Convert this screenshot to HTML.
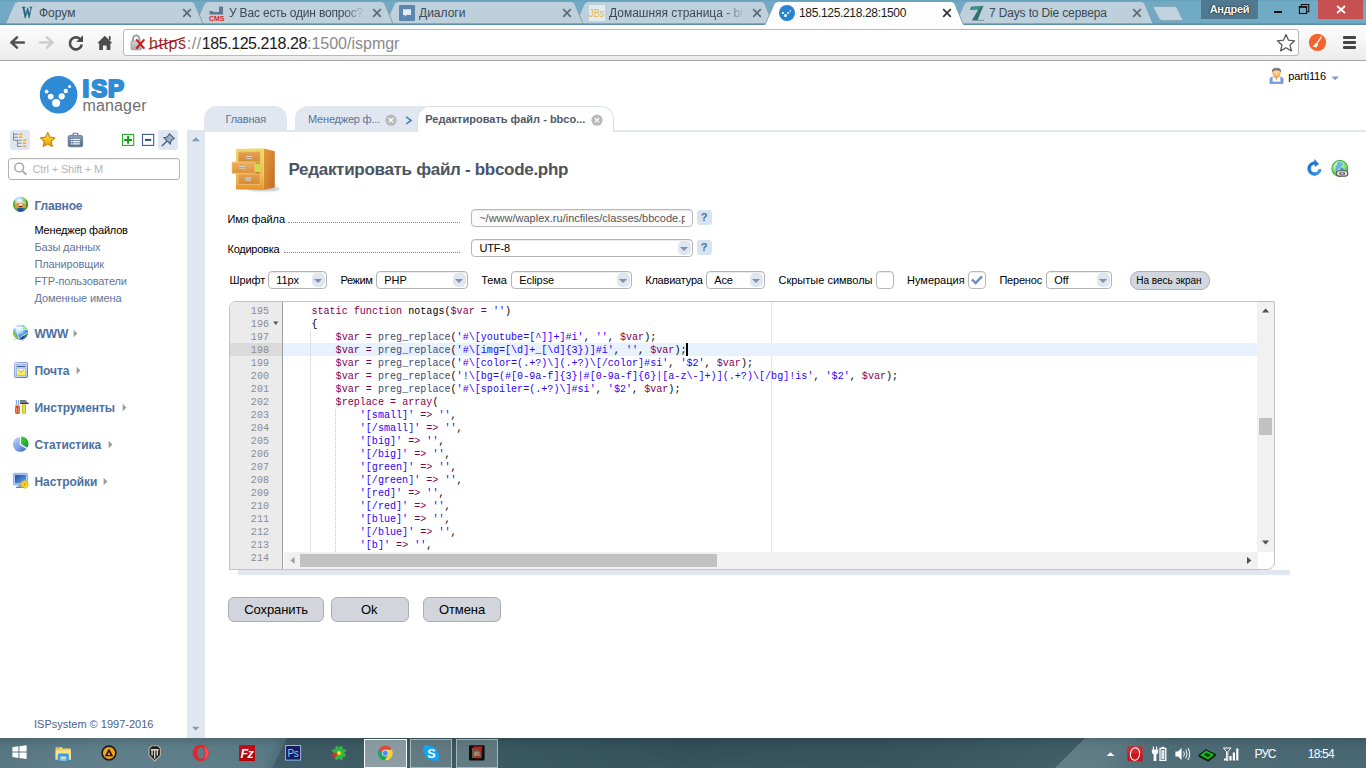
<!DOCTYPE html>
<html lang="ru">
<head>
<meta charset="utf-8">
<title>185.125.218.28:1500</title>
<style>
*{box-sizing:border-box;margin:0;padding:0}
html,body{width:1366px;height:768px;overflow:hidden;background:#fff}
body{font-family:"Liberation Sans",sans-serif;font-size:12px;color:#000;position:relative}
.abs{position:absolute}
/* ---------- browser chrome ---------- */
#frame{position:absolute;left:0;top:0;width:1366px;height:26px;background:#6ba6c1}
.bt{position:absolute;top:4px;font-size:12px;white-space:nowrap;width:147px;overflow:hidden;height:18px;line-height:18px}
.btab svg{position:absolute;left:0;top:0}
.btab .t{position:absolute;left:39px;top:4px;font-size:13px;color:#3f4d57;white-space:nowrap;letter-spacing:-0.1px}
.btab .x{position:absolute;right:22px;top:3px;font-size:14px;color:#5a6770}
#toolbar{position:absolute;left:0;top:24.6px;width:1366px;height:36.2px;background:linear-gradient(#fdfdfd,#ececec);border-bottom:1px solid #a5a5a5}
#url{position:absolute;left:123px;top:29px;width:1176px;height:27px;border:1px solid #b9b9b9;border-radius:3px;background:#fff}
#url .u{position:absolute;left:25px;top:3.5px;font-size:16px;line-height:19px;white-space:nowrap;color:#1a1a1a}
/* ---------- page ---------- */
#sep{position:absolute;left:187px;top:130px;width:18px;height:608px;background:#e1e7f0}
.mh{position:absolute;left:34px;font-size:13px;font-weight:bold;color:#4b6a9b;white-space:nowrap}
.mi{position:absolute;left:34px;font-size:12px;color:#5a7397;white-space:nowrap}
.ptab{position:absolute;top:106px;height:24.5px;background:#e1e7f0;border-radius:13px 13px 0 0;font-size:12px;color:#5a7397;white-space:nowrap}
.lbl{position:absolute;font-size:12px;color:#000;white-space:nowrap}
.sel{position:absolute;height:18px;border:1px solid #b4b4b4;border-radius:4px;background:#fff;font-size:12px;padding:3px 0 0 8px;white-space:nowrap;box-shadow:inset 0 1px 1px rgba(0,0,0,.08)}
.sel i{position:absolute;right:1.5px;top:1px;width:12.5px;height:14px;border-radius:5px;background:#e0e6ef}
.sel i:after{content:"";position:absolute;left:2.3px;top:6px;border:4px solid transparent;border-top:4px solid #7b90b4;border-bottom:0}
.q{position:absolute;width:15px;height:15px;border-radius:3px;background:#d7e4ef;color:#3f72a6;font-size:11px;font-weight:bold;text-align:center;line-height:15px}
.btn{position:absolute;top:597px;height:25px;background:#d2d6dc;border:1px solid #a9adb5;border-radius:6px}
.cb{position:absolute;width:17.5px;height:17.5px;border:1px solid #b9b9b9;border-radius:4px;background:#fff;box-shadow:inset 0 1px 1px rgba(0,0,0,.08)}
/* ---------- editor ---------- */
#ed{position:absolute;left:229px;top:301px;width:1046px;height:269px;border:1px solid #c3c3c3;border-radius:7px 0 8px 0;background:#fff;overflow:hidden}
#gut{position:absolute;left:0;top:0;width:53px;height:267px;background:#ebebeb;border-right:1px solid #9c9c9c}
.ln,.cl{position:absolute;font-family:"Liberation Mono",monospace;font-size:10.08px;line-height:13px;height:13px;white-space:pre}
.ln{left:0;width:39px;text-align:right;color:#8c8c94}
.cl{left:57.2px;color:#000}
.k{color:#7f0055}.s{color:#2a00ff}.f{color:#3c4c72}
/* ---------- taskbar ---------- */
#task{position:absolute;left:0;top:738px;width:1366px;height:30px;overflow:hidden;background:linear-gradient(90deg,#3f5c66 0%,#3b5862 27%,#38565f 36%,#324f59 50%,#35525c 65%,#3e5b65 78%,#3e5b65 100%)}

</style>
</head>
<body>
<div id="frame">
<svg class="abs" style="left:0;top:0" width="1366" height="26" viewBox="0 0 1366 26">
<defs><linearGradient id="fg" x1="0" y1="0" x2="0" y2="1"><stop offset="0" stop-color="#649fba"/><stop offset="0.07" stop-color="#70aac4"/><stop offset="1" stop-color="#70aac4"/></linearGradient></defs>
<rect width="1366" height="26" fill="url(#fg)"/>
<path d="M950.5,25.5 C955,25.5 956,23 957,20 L963.5,5.5 C964.5,2.5 966,1.5 969.5,1.5 L1139.5,1.5 C1143,1.5 1144.5,2.5 1145.5,5.5 L1151.5,20 C1152.5,23 1153.5,25.5 1158,25.5 Z" fill="#bdd0dc" stroke="#7d9fb1" stroke-width="1"/>
<path d="M570.5,25.5 C575,25.5 576,23 577,20 L583.5,5.5 C584.5,2.5 586,1.5 589.5,1.5 L759.5,1.5 C763,1.5 764.5,2.5 765.5,5.5 L771.5,20 C772.5,23 773.5,25.5 778,25.5 Z" fill="#bdd0dc" stroke="#7d9fb1" stroke-width="1"/>
<path d="M380.5,25.5 C385,25.5 386,23 387,20 L393.5,5.5 C394.5,2.5 396,1.5 399.5,1.5 L569.5,1.5 C573,1.5 574.5,2.5 575.5,5.5 L581.5,20 C582.5,23 583.5,25.5 588,25.5 Z" fill="#bdd0dc" stroke="#7d9fb1" stroke-width="1"/>
<path d="M190.5,25.5 C195,25.5 196,23 197,20 L203.5,5.5 C204.5,2.5 206,1.5 209.5,1.5 L379.5,1.5 C383,1.5 384.5,2.5 385.5,5.5 L391.5,20 C392.5,23 393.5,25.5 398,25.5 Z" fill="#bdd0dc" stroke="#7d9fb1" stroke-width="1"/>
<path d="M0.5,25.5 C5,25.5 6,23 7,20 L13.5,5.5 C14.5,2.5 16,1.5 19.5,1.5 L189.5,1.5 C193,1.5 194.5,2.5 195.5,5.5 L201.5,20 C202.5,23 203.5,25.5 208,25.5 Z" fill="#bdd0dc" stroke="#7d9fb1" stroke-width="1"/>
<path d="M1153.5,6.5 L1174,6.5 C1176,6.5 1177,7.5 1177.8,9.5 L1182.5,19 C1183,20.5 1182.5,20.5 1181,20.5 L1162.5,20.5 C1160.5,20.5 1159.5,19.5 1158.5,17.5 L1153.5,8 C1152.8,6.8 1152.8,6.5 1153.5,6.5 Z" fill="#c1d3de" stroke="#86a7b8" stroke-width="1"/>
<rect x="0" y="23.4" width="1366" height="2.6" fill="#5f8fa7"/>
<path d="M760.5,26.5 C765,26.5 766,23 767,20 L773.5,5.5 C774.5,2.5 776,1.5 779.5,1.5 L949.5,1.5 C953,1.5 954.5,2.5 955.5,5.5 L961.5,20 C962.5,23 963.5,26.5 968,26.5 Z" fill="#fdfdfd"/>
<path d="M760.5,26.5 C765,26.5 766,23 767,20 L773.5,5.5 C774.5,2.5 776,1.5 779.5,1.5 L949.5,1.5 C953,1.5 954.5,2.5 955.5,5.5 L961.5,20 C962.5,23 963.5,26.5 968,26.5" fill="none" stroke="#7fa0b2" stroke-width="1"/>
</svg>
<div class="bt" style="left:39px;color:#3c4a54;letter-spacing:0px">Форум</div>
<svg class="abs" style="left:182px;top:8px" width="10" height="10" viewBox="0 0 10 10"><path d="M1.2,1.2 L8.8,8.8 M8.8,1.2 L1.2,8.8" stroke="#5d6b75" stroke-width="1.7" fill="none"/></svg>
<div class="bt" style="left:229px;color:#3c4a54;letter-spacing:-0.18px;-webkit-mask-image:linear-gradient(90deg,#000 0,#000 115px,transparent 136px);mask-image:linear-gradient(90deg,#000 0,#000 115px,transparent 136px)">У Вас есть один вопрос?</div>
<svg class="abs" style="left:372px;top:8px" width="10" height="10" viewBox="0 0 10 10"><path d="M1.2,1.2 L8.8,8.8 M8.8,1.2 L1.2,8.8" stroke="#5d6b75" stroke-width="1.7" fill="none"/></svg>
<div class="bt" style="left:419px;color:#3c4a54;letter-spacing:0px">Диалоги</div>
<svg class="abs" style="left:562px;top:8px" width="10" height="10" viewBox="0 0 10 10"><path d="M1.2,1.2 L8.8,8.8 M8.8,1.2 L1.2,8.8" stroke="#5d6b75" stroke-width="1.7" fill="none"/></svg>
<div class="bt" style="left:609px;color:#3c4a54;letter-spacing:-0.02px;-webkit-mask-image:linear-gradient(90deg,#000 0,#000 115px,transparent 136px);mask-image:linear-gradient(90deg,#000 0,#000 115px,transparent 136px)">Домашняя страница - bi</div>
<svg class="abs" style="left:752px;top:8px" width="10" height="10" viewBox="0 0 10 10"><path d="M1.2,1.2 L8.8,8.8 M8.8,1.2 L1.2,8.8" stroke="#5d6b75" stroke-width="1.7" fill="none"/></svg>
<div class="bt" style="left:799px;color:#1a1a1a;letter-spacing:-0.34px">185.125.218.28:1500</div>
<svg class="abs" style="left:942px;top:8px" width="10" height="10" viewBox="0 0 10 10"><path d="M1.2,1.2 L8.8,8.8 M8.8,1.2 L1.2,8.8" stroke="#333" stroke-width="1.7" fill="none"/></svg>
<div class="bt" style="left:989px;color:#3c4a54;letter-spacing:-0.15px">7 Days to Die сервера</div>
<svg class="abs" style="left:1132px;top:8px" width="10" height="10" viewBox="0 0 10 10"><path d="M1.2,1.2 L8.8,8.8 M8.8,1.2 L1.2,8.8" stroke="#5d6b75" stroke-width="1.7" fill="none"/></svg>
</div>
<!-- favicons -->
<div class="abs" style="left:22px;top:3px;font-family:'Liberation Serif',serif;font-weight:bold;font-size:17px;color:#26627e;-webkit-text-stroke:.5px #26627e;transform:scaleX(.6);transform-origin:0 0;letter-spacing:-1px">W</div>
<svg class="abs" style="left:209px;top:5px" width="16" height="16" viewBox="0 0 16 16"><path d="M0.5,6 H4 V7 H10 V1.5 H14 V9.5 H0.5 Z" fill="#5f7890"/><text x="0" y="16" font-family="Liberation Sans,sans-serif" font-weight="bold" font-size="6.6" fill="#e8202a" textLength="15.5" lengthAdjust="spacingAndGlyphs">CMS</text></svg>
<svg class="abs" style="left:399px;top:5px" width="16" height="16" viewBox="0 0 16 16"><rect width="16" height="16" rx="1" fill="#5d87b0"/><path d="M4,4.2 H12 V10 H7.5 L5.8,12 V10 H4 Z" fill="#e2eef6"/></svg>
<svg class="abs" style="left:589px;top:5px" width="16" height="16" viewBox="0 0 16 16"><rect width="16" height="16" fill="#dfecf3"/><text x="0" y="12" font-family="Liberation Sans,sans-serif" font-size="10" fill="#e6b54a" textLength="15.5" lengthAdjust="spacingAndGlyphs">JBs</text></svg>
<svg class="abs" style="left:779px;top:5px" width="16" height="16" viewBox="0 0 16 16"><circle cx="8" cy="8" r="8" fill="#2a83cf"/><circle cx="6.5" cy="10.6" r="1.5" fill="#fff"/><circle cx="3.9" cy="8" r="1.1" fill="#fff"/><circle cx="9.1" cy="8.1" r="1" fill="#fff"/><circle cx="11.2" cy="6" r=".8" fill="#fff"/></svg>
<svg class="abs" style="left:969px;top:5px" width="16" height="16" viewBox="0 0 16 16"><path d="M2,1.8 L14.5,0.8 L8.6,15 L3.2,15 L9.3,4.6 L1.2,5 Z" fill="#2f7470"/><path d="M4,1.8 L13,1.2 L9,5 L2,4.6Z" fill="#4aa39a" opacity=".7"/><path d="M3,15.4 H15" stroke="#5a6a72" stroke-width=".6"/></svg>
<!-- window controls -->
<div class="abs" style="left:1201px;top:0;width:57px;height:19px;background:#50798f;color:#fff;font-size:11px;font-weight:bold;text-align:center;line-height:18px;letter-spacing:-.25px;text-shadow:0 0 2px rgba(0,0,0,.9),0 0 1px rgba(0,0,0,.6)">Андрей</div>
<div class="abs" style="left:1274px;top:10.9px;width:8.2px;height:2.3px;background:#111"></div>
<svg class="abs" style="left:1298px;top:3px" width="12" height="12" viewBox="1298 3 12 12"><path d="M1301.4,6 V4.5 H1308.8 V11.6 H1307.2" fill="none" stroke="#111" stroke-width="1.1"/><rect x="1299.4" y="7" width="7.2" height="6.5" fill="none" stroke="#111" stroke-width="1.1"/><rect x="1298.85" y="6" width="8.3" height="1.6" fill="#111"/></svg>
<div class="abs" style="left:1318px;top:0;width:45px;height:19px;background:#c75050"></div>
<svg class="abs" style="left:1336px;top:5px" width="10" height="9" viewBox="1336 5 10 9"><path d="M1337.2,6 L1345,13 M1345,6 L1337.2,13" stroke="#fff" stroke-width="1.8" fill="none"/></svg>
<!-- toolbar -->
<div id="toolbar"></div>
<svg class="abs" style="left:8px;top:34px" width="110" height="18" viewBox="0 0 110 18"><g fill="none" stroke-linecap="round" stroke-linejoin="round">
<path d="M9,3.4 L3.4,8.5 L9,13.6 M4,8.5 H15.8" stroke="#525252" stroke-width="2.6"/>
<path d="M39,3.4 L44.6,8.5 L39,13.6 M44,8.5 H32.2" stroke="#cdcdcd" stroke-width="2.6"/>
<path d="M72.2,5.2 A6,6 0 1 0 73.8,10.5" stroke="#4d4d4d" stroke-width="2.6" stroke-linecap="butt"/></g>
<path d="M75,1.2 V8 H68.2 Z" fill="#4d4d4d"/>
<path d="M96.8,1.8 L89.2,9.2 H91.2 V16 H95 V11.5 H98.6 V16 H102.4 V9.2 H104.4 Z" fill="#4d4d4d"/><rect x="100.8" y="2.2" width="1.8" height="4" fill="#4d4d4d"/></svg>
<div id="url">
<svg class="abs" style="left:6px;top:3px" width="20" height="20" viewBox="0 0 20 20"><defs><linearGradient id="lkg" x1="0" y1="0" x2="0" y2="1"><stop offset="0" stop-color="#d6d6d6"/><stop offset="1" stop-color="#a6a6a6"/></linearGradient></defs><path d="M3,8.4 V5.8 A3.2,3.4 0 0 1 9.4,5.8 V8.4" fill="none" stroke="#9c9c9c" stroke-width="1.9"/><rect x="1" y="8" width="10.6" height="8.8" rx="1.2" fill="url(#lkg)" stroke="#929292" stroke-width=".7"/><path d="M6.2,6.4 L14.4,15.6 M14.4,6.4 L6.2,15.6" stroke="#d81212" stroke-width="2"/></svg>
<div class="u"><span style="color:#9c2a2a;position:relative;letter-spacing:.59px">https<svg class="abs" style="left:-1px;top:0" width="44" height="20" viewBox="0 0 44 20"><path d="M.8,14.2 L36.8,2.4" stroke="#a81616" stroke-width="1.3"/></svg></span><span style="color:#8a8a8a;letter-spacing:.59px">://</span><span style="letter-spacing:-.43px">185.125.218.28</span><span style="color:#8a8a8a">:1500/ispmgr</span></div>
<svg class="abs" style="left:1152px;top:3px" width="20" height="20" viewBox="0 0 20 20"><path d="M10,1.6 L12.5,7.2 L18.6,7.8 L14,11.9 L15.4,17.9 L10,14.7 L4.6,17.9 L6,11.9 L1.4,7.8 L7.5,7.2 Z" fill="#fff" stroke="#5a5a5a" stroke-width="1.3" stroke-linejoin="round"/></svg>
</div>
<svg class="abs" style="left:1308px;top:33px" width="19" height="19" viewBox="0 0 19 19"><circle cx="9.5" cy="9.3" r="8.6" fill="#f4622e"/><path d="M13.6,3.6 L8.8,10.6" stroke="#fff" stroke-width="1.2"/><path d="M8.2,9.8 L10.2,11.2 L8.6,14.6 L4.6,13.4 Z" fill="#fff"/></svg>
<div class="abs" style="left:1343px;top:36px;width:13px;height:3px;background:#444;border-radius:1px;box-shadow:0 5px 0 #444,0 10px 0 #444"></div>

<!-- ===== page: sidebar ===== -->
<div id="sep"></div>
<svg class="abs" style="left:187px;top:130px" width="17" height="608" viewBox="0 0 17 608"><path d="M4.8,11.2 L8.9,7.2 L13,11.2 Z" fill="#8799b8"/><path d="M5,596.8 L8.8,600.6 L12.6,596.8 Z" fill="#8799b8"/></svg>
<!-- logo -->
<svg class="abs" style="left:38px;top:74px" width="42" height="42" viewBox="38 74 42 42"><circle cx="58.6" cy="94.8" r="18.8" fill="#2f8bd5"/><g fill="#fff"><circle cx="56.1" cy="103.1" r="4"/><circle cx="50.7" cy="96.6" r="2.9"/><circle cx="46.6" cy="91.6" r="1.9"/><circle cx="61.7" cy="96.3" r="3.1"/><circle cx="65.8" cy="91" r="2.2"/><circle cx="69.6" cy="86.5" r="1.5"/></g></svg>
<svg class="abs" style="left:80px;top:74px" width="50" height="28" viewBox="80 74 50 28"><text y="96.8" font-family="Liberation Sans,sans-serif" font-weight="bold" font-size="24" fill="#2f8bd5" stroke="#2f8bd5" stroke-width="2.2" stroke-linejoin="round"><tspan x="82.5">I</tspan><tspan x="91.2">S</tspan><tspan x="108.1">P</tspan></text></svg>
<div class="abs" style="left:82.5px;top:97px;font-size:16px;line-height:18px;color:#6f6f6f;letter-spacing:.15px">manager</div>
<!-- sidebar toolbar -->
<div class="abs" style="left:10px;top:130px;width:20px;height:20px;border-radius:3px;background:#dfe6f0"></div>
<svg class="abs" style="left:10px;top:130px" width="20" height="20" viewBox="10 130 20 20"><path d="M13.5,132.8 V140.3 H21.6 M13.5,134.3 H18 M13.5,137.3 H18 M17.4,140.3 V146.5 H21.6 M17.4,143.2 H21.6" fill="none" stroke="#8a8a8a" stroke-width="1"/><g fill="#f5a91c"><rect x="19" y="133.1" width="3.1" height="1.9"/><rect x="19" y="136" width="3.1" height="1.9"/><rect x="23" y="139" width="3.1" height="1.9"/><rect x="23" y="142" width="3.1" height="1.9"/><rect x="23" y="145" width="3.1" height="1.9"/></g><g fill="#f9cf5a"><rect x="19" y="133.1" width="3.1" height=".8"/><rect x="19" y="136" width="3.1" height=".8"/><rect x="23" y="139" width="3.1" height=".8"/><rect x="23" y="142" width="3.1" height=".8"/><rect x="23" y="145" width="3.1" height=".8"/></g></svg>
<svg class="abs" style="left:38px;top:130px" width="20" height="19" viewBox="38 130 20 19"><defs><linearGradient id="stg" x1="0" y1="0" x2="0" y2="1"><stop offset="0" stop-color="#ffe566"/><stop offset=".5" stop-color="#f9c31e"/><stop offset="1" stop-color="#e59a0c"/></linearGradient></defs><path d="M47.7,132.6 L49.9,137.2 L54.9,137.8 L51.2,141.3 L52.2,146.4 L47.7,143.9 L43.2,146.4 L44.2,141.3 L40.5,137.8 L45.5,137.2 Z" fill="url(#stg)" stroke="#c98a12" stroke-width="1.2" stroke-linejoin="round"/></svg>
<svg class="abs" style="left:66px;top:131px" width="19" height="18" viewBox="66 131 19 18"><defs><linearGradient id="bcg" x1="0" y1="0" x2="0" y2="1"><stop offset="0" stop-color="#8ea3bd"/><stop offset=".5" stop-color="#6a819f"/><stop offset="1" stop-color="#566d8c"/></linearGradient></defs><path d="M73,135.4 V134 Q73,133.2 73.8,133.2 H77 Q77.8,133.2 77.8,134 V135.4" fill="none" stroke="#5f7593" stroke-width="1.1"/><rect x="68.2" y="135.4" width="14.4" height="11.4" rx="1.6" fill="url(#bcg)" stroke="#5a708e" stroke-width=".8"/><path d="M72.5,139.5 H79.8 M72.5,141.7 H79.8 M72.5,143.8 H79.8" stroke="#fff" stroke-width="1.2"/><path d="M70.8,139.5 H71.9 M70.8,141.7 H71.9 M70.8,143.8 H71.9" stroke="#fff" stroke-width="1.2"/></svg>
<svg class="abs" style="left:121px;top:133px" width="14" height="14" viewBox="121 133 14 14"><rect x="122.5" y="134.4" width="11.2" height="11" fill="#fff" stroke="#1fb01f" stroke-width="1.1"/><path d="M128.1,136 V143.8 M124.2,139.9 H132" stroke="#14a014" stroke-width="2"/></svg>
<svg class="abs" style="left:141px;top:133px" width="14" height="14" viewBox="141 133 14 14"><rect x="142.5" y="134.4" width="11.2" height="11" fill="#fff" stroke="#3d5a96" stroke-width="1.1"/><path d="M145,139.9 H151.2" stroke="#2c4f91" stroke-width="2"/></svg>
<div class="abs" style="left:158px;top:130px;width:20px;height:20px;border-radius:3px;background:#dfe6f0"></div>
<svg class="abs" style="left:160px;top:132px" width="16" height="16" viewBox="0 0 16 16"><path d="M9.4,1.6 L14.4,6.6 L12.8,7.2 L10.6,9.6 L10.4,12.2 L3.8,5.6 L6.4,5.4 L8.8,3.2 Z" fill="#9fb0c8" stroke="#4a5f7f" stroke-width="1.1" stroke-linejoin="round"/><path d="M6.8,9.2 L2.2,13.8" stroke="#4a5f7f" stroke-width="1.4" stroke-linecap="round"/></svg>
<!-- search -->
<div class="abs" style="left:8px;top:158px;width:172px;height:22px;border:1px solid #b4b4b4;border-radius:3px;background:#fff;box-shadow:inset 0 1px 1px rgba(0,0,0,.06)"></div>
<svg class="abs" style="left:13px;top:161px" width="15" height="15" viewBox="0 0 15 15"><circle cx="6.2" cy="6.4" r="4.4" fill="none" stroke="#a8a8a8" stroke-width="1.5"/><path d="M9.4,9.8 L13,13.4" stroke="#a8a8a8" stroke-width="1.7" stroke-linecap="round"/></svg>
<!-- menu icons -->
<svg class="abs" style="left:12px;top:196px" width="18" height="18" viewBox="12 196 18 18"><defs><radialGradient id="gl1" cx=".42" cy=".28" r=".75"><stop offset="0" stop-color="#ffffff"/><stop offset=".3" stop-color="#b8dcfa"/><stop offset=".6" stop-color="#4a95e0"/><stop offset="1" stop-color="#1a4fae"/></radialGradient><clipPath id="gc1"><circle cx="20.5" cy="204.3" r="7.5"/></clipPath></defs><circle cx="20.5" cy="204.3" r="7.5" fill="url(#gl1)"/><g clip-path="url(#gc1)"><path d="M12,200.6 H15.2 V208 H17.6 V213 H12Z" fill="#58b41c"/><path d="M22.8,197.6 Q26,197.6 27,200.8 L23,201Z" fill="#8fdc2c"/><path d="M26,200 L29,199.5 V213 H23.4 V208 H26Z" fill="#3c9c10"/><path d="M17.6,208 H23.4 V213 H17.6Z" fill="#1d4fb0"/><path d="M12,200.6 H13.4 V209 L12,209Z" fill="#9fe03a" opacity=".6"/></g><rect x="15" y="202.3" width="11" height="5.8" fill="#d99a46"/><rect x="15" y="202.3" width="11" height="1" fill="#f6e2c0"/><rect x="19.2" y="203.6" width="2.8" height="2.4" fill="#f4ee5a"/><circle cx="20.5" cy="204.4" r=".7" fill="#fff"/><rect x="19" y="206.2" width="3.2" height=".9" fill="#2a1a08"/></svg>
<svg class="abs" style="left:12px;top:323px" width="18" height="19" viewBox="12 323 18 19"><defs><clipPath id="gc2"><circle cx="20.5" cy="332.3" r="7.5"/></clipPath></defs><circle cx="20.5" cy="332.3" r="7.5" fill="url(#gl1)"/><g clip-path="url(#gc2)"><path d="M12.6,329.4 Q14.6,331 15.4,334 Q16.4,336.6 18.4,337.8 L15.6,340 L12,336Z" fill="#86d424"/><path d="M23,326 Q26.6,326.4 28,330 Q25.6,329.6 23,328.4Z" fill="#7fd024"/><path d="M28.6,333 Q27,337.6 23,339.6 L24,341 L29,338Z M23.2,338.4 Q24.6,335 28,333 L28.4,335 Q26.6,338 23.2,339.8Z" fill="#3a9c10"/><path d="M17,339 L22.6,339.6 L25,336 L21,336.6Z" fill="#1f48a8"/><path d="M13.6,326.6 Q20,330 28.6,329.6 M15.6,325.6 Q17,333 19.4,340 M28,332.6 Q22,335.4 17.4,339.8 M13,328 Q21,326.4 27,328" fill="none" stroke="#fff" stroke-width=".9" opacity=".85"/></g><path d="M13.4,339.6 H16 M21.6,340.6 H24" stroke="#aebce0" stroke-width=".7"/></svg>
<svg class="abs" style="left:13px;top:361px" width="16" height="18" viewBox="13 361 16 18"><defs><linearGradient id="mbg" x1="0" y1="0" x2="1" y2="1"><stop offset="0" stop-color="#a9c0ee"/><stop offset="1" stop-color="#4a68aa"/></linearGradient><linearGradient id="myl" x1="0" y1="0" x2="0" y2="1"><stop offset="0" stop-color="#f7f7c8"/><stop offset="1" stop-color="#f0ec3a"/></linearGradient></defs><rect x="14.6" y="362.5" width="12.8" height="15" rx="1.6" fill="#dfe8fa" stroke="url(#mbg)" stroke-width="1.1"/><rect x="16.2" y="364.2" width="9.6" height="11.8" fill="#b9ccf2" stroke="#8aa6e2" stroke-width=".6"/><rect x="17" y="366" width="8" height="1" fill="#3f5a94"/><rect x="17" y="369" width="8" height="6" fill="url(#myl)"/><path d="M18,369.8 L21,372.4 L24,369.8" fill="none" stroke="#b8b43a" stroke-width="1"/></svg>
<svg class="abs" style="left:13px;top:398px" width="18" height="18" viewBox="13 398 18 18"><defs><linearGradient id="hmh" x1="0" y1="0" x2="1" y2="0"><stop offset="0" stop-color="#a8a818"/><stop offset=".5" stop-color="#f2f254"/><stop offset="1" stop-color="#a8a818"/></linearGradient><linearGradient id="hhd" x1="0" y1="0" x2="0" y2="1"><stop offset="0" stop-color="#2e3a54"/><stop offset=".45" stop-color="#8f9ab0"/><stop offset="1" stop-color="#1e2840"/></linearGradient></defs><path d="M16.4,400 V405 M18.5,400 V405" stroke="#7fa2e0" stroke-width="1"/><path d="M15,405 Q17.5,406 20,405 L19.4,406.6 Q20,407.4 20,409 V412.4 Q20,414 17.5,414 Q15,414 15,412.4 V409 Q15,407.4 15.6,406.6Z" fill="#e8481c"/><path d="M16.3,408 V412.8 M18.7,408 V412.8" stroke="#f9b29c" stroke-width=".8"/><path d="M20,400.2 H25.6 L28.8,403.4 V403.9 H20Z" fill="url(#hhd)"/><rect x="22" y="403.9" width="4" height="10" rx="1" fill="url(#hmh)"/></svg>
<svg class="abs" style="left:12px;top:435px" width="18" height="18" viewBox="12 435 18 18"><defs><linearGradient id="pie1" x1="0" y1="0" x2="1" y2="1"><stop offset="0" stop-color="#c4d8f8"/><stop offset=".5" stop-color="#7fa6e6"/><stop offset="1" stop-color="#2f5fc0"/></linearGradient><linearGradient id="pie2" x1="0" y1="0" x2="1" y2="1"><stop offset="0" stop-color="#3fd83a"/><stop offset="1" stop-color="#0f9a1a"/></linearGradient></defs><circle cx="20.3" cy="444.4" r="7.4" fill="url(#pie1)"/><path d="M20.3,444.4 L20.3,437 M20.3,444.4 L26.6,448.2" stroke="#fff" stroke-width="1.2"/><path d="M21.2,443.6 L21.2,436.6 A7.2,7.2 0 0 1 27.6,447.2 Z" fill="url(#pie2)"/></svg>
<svg class="abs" style="left:12px;top:472px" width="18" height="18" viewBox="12 472 18 18"><defs><linearGradient id="scr" x1="0" y1="0" x2="1" y2="1"><stop offset="0" stop-color="#1f4fa6"/><stop offset=".6" stop-color="#4a80d0"/><stop offset="1" stop-color="#8fb8f0"/></linearGradient></defs><rect x="13.4" y="473.3" width="14.2" height="11.6" rx="1" fill="#b4ccf2" stroke="#7fa0dc" stroke-width=".8"/><rect x="15" y="474.9" width="11" height="8.4" fill="url(#scr)"/><path d="M18.6,485 H22.6 L23,486.8 H18.2Z" fill="#7fa0dc"/><rect x="16" y="486.6" width="9" height="1.4" rx=".6" fill="#5f86cc"/><g transform="translate(24.5,484.4)"><g fill="#f2d21a" stroke="#c89a0a" stroke-width=".3"><ellipse cx="0" cy="-2.6" rx="1.2" ry="1.5"/><ellipse cx="0" cy="-2.6" rx="1.2" ry="1.5" transform="rotate(45)"/><ellipse cx="0" cy="-2.6" rx="1.2" ry="1.5" transform="rotate(90)"/><ellipse cx="0" cy="-2.6" rx="1.2" ry="1.5" transform="rotate(135)"/><ellipse cx="0" cy="-2.6" rx="1.2" ry="1.5" transform="rotate(180)"/><ellipse cx="0" cy="-2.6" rx="1.2" ry="1.5" transform="rotate(225)"/><ellipse cx="0" cy="-2.6" rx="1.2" ry="1.5" transform="rotate(270)"/><ellipse cx="0" cy="-2.6" rx="1.2" ry="1.5" transform="rotate(315)"/></g><circle r="2.2" fill="#f6e04a"/><circle r="1" fill="#e0701a"/></g></svg>
<!-- ===== main: page tabs ===== -->
<div class="abs" style="left:204px;top:129.5px;width:1162px;height:2px;background:#e1e7f0"></div>
<div class="ptab" style="left:204px;width:83px"></div>
<div class="ptab" style="left:295px;width:140px"></div>
<div class="abs" style="left:417px;top:106px;width:197px;height:26px;background:#fff;border:1px solid #d9e0ea;border-bottom:0;border-radius:13px 13px 0 0"></div>
<svg class="abs" style="left:385px;top:114px" width="12" height="12" viewBox="0 0 12 12"><circle cx="6" cy="6.2" r="5.6" fill="#b9b9b9"/><path d="M3.8,4 L8.2,8.4 M8.2,4 L3.8,8.4" stroke="#fff" stroke-width="1.2"/></svg>
<svg class="abs" style="left:591px;top:114px" width="12" height="12" viewBox="0 0 12 12"><circle cx="6" cy="6.2" r="5.6" fill="#b9b9b9"/><path d="M3.8,4 L8.2,8.4 M8.2,4 L3.8,8.4" stroke="#fff" stroke-width="1.2"/></svg>
<svg class="abs" style="left:404px;top:115px" width="10" height="10" viewBox="0 0 10 10"><path d="M2.2,1.8 L7,5.4 L2.2,9" fill="none" stroke="#3a7abf" stroke-width="1.5"/></svg>
<!-- user -->
<svg class="abs" style="left:1269px;top:67px" width="15" height="17" viewBox="0 0 15 17"><defs><radialGradient id="ug" cx=".5" cy=".4" r=".7"><stop offset="0" stop-color="#ffe6bc"/><stop offset="1" stop-color="#f0963a"/></radialGradient></defs><path d="M1,16.6 V12 Q1,10.6 2.4,10.4 L5.6,9.8 H9.4 L12.6,10.4 Q14,10.6 14,12 V16.6 Z" fill="#7a9ee0" stroke="#4f78c4" stroke-width=".6"/><path d="M3.6,10.2 L11.4,10.2 V14.6 H3.6Z" fill="#fff"/><path d="M5.6,9 L7.5,13.6 L9.4,9Z" fill="#f0a04a"/><ellipse cx="7.5" cy="5.9" rx="4.1" ry="4.7" fill="url(#ug)"/><path d="M3,5.6 Q2.4,0.8 7.5,0.8 Q12.6,0.8 12,5.6 Q11.2,3 7.5,3.4 Q3.8,3 3,5.6Z" fill="#6a6a6a"/><path d="M4.6,2.2 Q7.5,0.9 10.4,2.2 Q7.5,1.7 4.6,2.2Z" fill="#e0e0e0"/></svg>
<svg class="abs" style="left:1331px;top:76px" width="9" height="5" viewBox="0 0 9 5"><path d="M.4,.4 H8 L4.2,4.2Z" fill="#8799b8"/></svg>
<!-- title icons right -->
<svg class="abs" style="left:1306px;top:159px" width="16" height="17" viewBox="0 0 16 17"><defs><linearGradient id="rfg" x1="0" y1="0" x2="1" y2="1"><stop offset="0" stop-color="#1565c8"/><stop offset="1" stop-color="#2ea4f8"/></linearGradient></defs><path d="M8.6,0.6 L12.8,5 L9,7.4 L9,5.6 A4,4 0 1 0 12.6,10.4 L15.2,10.4 A6.8,6.8 0 1 1 8.4,2.8 Z" fill="url(#rfg)" stroke="#0f56b0" stroke-width=".4"/></svg>
<svg class="abs" style="left:1331.2px;top:159.6px" width="18" height="18" viewBox="0 0 18 18"><defs><radialGradient id="gg" cx=".4" cy=".3" r=".8"><stop offset="0" stop-color="#f0fce8"/><stop offset=".45" stop-color="#9ae488"/><stop offset=".8" stop-color="#4ecb4a"/><stop offset="1" stop-color="#2fa02f"/></radialGradient></defs><circle cx="8.8" cy="8.4" r="7.9" fill="url(#gg)" stroke="#3cae3c" stroke-width="1.1"/><path d="M7,2 Q11,1.4 12,4 L10,7 L7.4,9 L5,12 Q3.6,8 5.6,5Z" fill="#5aa8e0" opacity=".85"/><path d="M9,7.6 Q12,7 13,9.4 L12,12 L9,12Z" fill="#3d88d0" opacity=".8"/><rect x="5.4" y="10.7" width="11.4" height="5.4" rx="2.6" fill="#e8e8e8" stroke="#555" stroke-width="1.1"/><rect x="8.2" y="12.4" width="5.8" height="2" rx=".8" fill="#222"/><rect x="9.6" y="12.9" width="3" height=".9" fill="#fff"/></svg>
<!-- title icon: cabinet -->
<svg class="abs" style="left:228px;top:144px" width="56" height="50" viewBox="228 144 56 50"><defs>
<linearGradient id="cf" x1="0" y1="0" x2="0" y2="1"><stop offset="0" stop-color="#ecd96a"/><stop offset=".6" stop-color="#ecc252"/><stop offset="1" stop-color="#e8922a"/></linearGradient>
<linearGradient id="cs" x1="0" y1="0" x2="1" y2="1"><stop offset="0" stop-color="#e89a3e"/><stop offset="1" stop-color="#bd6e22"/></linearGradient>
<linearGradient id="cd" x1="0" y1="0" x2="0" y2="1"><stop offset="0" stop-color="#e6a250"/><stop offset="1" stop-color="#d58a34"/></linearGradient>
<linearGradient id="cm" x1="0" y1="0" x2="0" y2="1"><stop offset="0" stop-color="#f0b060"/><stop offset="1" stop-color="#dc9038"/></linearGradient>
<linearGradient id="ch" x1="0" y1="0" x2="0" y2="1"><stop offset="0" stop-color="#fafafa"/><stop offset=".5" stop-color="#9a9aa6"/><stop offset="1" stop-color="#e8e8f0"/></linearGradient>
<filter id="bl" x="-20%" y="-60%" width="140%" height="220%"><feGaussianBlur stdDeviation="1.3"/></filter></defs>
<ellipse cx="264" cy="189" rx="16" ry="2" fill="#000" opacity=".25" filter="url(#bl)"/>
<path d="M263.7,148.4 L274.8,151.3 V187.4 L263.7,189.8Z" fill="url(#cs)"/>
<path d="M236,148.9 L263.7,148.4 V189.8 L236,189.4Z" fill="url(#cf)"/>
<path d="M238.2,151.8 L260.2,151.6 V162 H238.2Z" fill="url(#cd)" stroke="#f0c878" stroke-width=".7"/>
<path d="M238.2,173.9 H260.2 V184.6 L238.2,184.4Z" fill="url(#cd)" stroke="#f0c878" stroke-width=".7"/>
<path d="M238.6,162.4 H260 V173.6 H238.6Z" fill="#c98430"/>
<path d="M254.6,163.7 H260.2 V172 H254.6Z" fill="#c4de4c"/>
<path d="M232,162 L255,162.4 V173.6 L232,173.4Z" fill="url(#cm)" stroke="#f4cc80" stroke-width=".7"/>
<g fill="url(#ch)"><rect x="245.6" y="156.2" width="6.6" height="2.6" rx=".8"/><rect x="239" y="166" width="6.6" height="2.6" rx=".8"/><rect x="244.8" y="177.8" width="6.6" height="2.6" rx=".8"/></g>
</svg>
<!-- form boxes -->
<div class="abs" style="left:288px;top:222px;width:172px;border-top:1px dotted #8a8a8a"></div>
<div class="abs" style="left:284px;top:252px;width:176px;border-top:1px dotted #8a8a8a"></div>
<div class="abs" style="left:471px;top:209px;width:222px;height:18px;border:1px solid #b9b9b9;border-radius:4px;background:#fbfbfb;box-shadow:inset 0 1px 1px rgba(0,0,0,.08)"></div>
<div class="q" style="left:696.5px;top:210px">?</div>
<div class="q" style="left:696.5px;top:240px">?</div>
<div class="sel" style="left:471px;top:239px;width:222px"><i></i></div>
<div class="sel" style="left:268px;top:271px;width:59px"><i></i></div>
<div class="sel" style="left:376px;top:271px;width:92px"><i></i></div>
<div class="sel" style="left:511px;top:271px;width:121px"><i></i></div>
<div class="sel" style="left:706px;top:271px;width:59px"><i></i></div>
<div class="sel" style="left:1046px;top:271px;width:66px"><i></i></div>
<div class="cb" style="left:876px;top:271px"></div>
<div class="cb" style="left:968px;top:271px"><svg class="abs" style="left:1px;top:2px" width="14" height="12" viewBox="0 0 14 12"><path d="M2,5.4 L5.6,9 L12,2.4" fill="none" stroke="#6a8ebf" stroke-width="2.4"/></svg></div>
<div class="abs" style="left:1129.5px;top:271px;width:80px;height:19px;border:1px solid #a9afb8;border-radius:9px;background:#d2d7de"></div>
<!-- bottom buttons -->
<div class="btn" style="left:228px;width:96px"></div>
<div class="btn" style="left:331px;width:78px"></div>
<div class="btn" style="left:423px;width:78px"></div>

<div style="position:absolute;left:32.5px;top:163px;font-size:11px;line-height:12px;white-space:pre;color:#b4b4be;letter-spacing:-.18px">Ctrl + Shift + M</div>
<div style="position:absolute;left:34.5px;top:199px;font-size:12px;line-height:14px;white-space:pre;color:#4c70a5;font-weight:bold;letter-spacing:-.05px;letter-spacing:-.2px">Главное</div>
<div style="position:absolute;left:34.5px;top:224px;font-size:11px;line-height:12px;white-space:pre;color:#000;letter-spacing:-.2px">Менеджер файлов</div>
<div style="position:absolute;left:34.5px;top:241px;font-size:11px;line-height:12px;white-space:pre;color:#5f7799;letter-spacing:-.12px">Базы данных</div>
<div style="position:absolute;left:34.5px;top:258px;font-size:11px;line-height:12px;white-space:pre;color:#5f7799;letter-spacing:-.12px">Планировщик</div>
<div style="position:absolute;left:34.5px;top:275px;font-size:11px;line-height:12px;white-space:pre;color:#5f7799;letter-spacing:-.12px">FTP-пользователи</div>
<div style="position:absolute;left:34.5px;top:292px;font-size:11px;line-height:12px;white-space:pre;color:#5f7799;letter-spacing:-.12px">Доменные имена</div>
<div style="position:absolute;left:34.5px;top:327px;font-size:12px;line-height:14px;white-space:pre;color:#4c70a5;font-weight:bold;letter-spacing:-.05px">WWW</div>
<svg style="position:absolute;left:73px;top:329px" width="5" height="9" viewBox="0 0 5 9"><path d="M.6,.8 L4.4,4.5 L.6,8.2Z" fill="#9a9a9a"/></svg>
<div style="position:absolute;left:34.5px;top:364px;font-size:12px;line-height:14px;white-space:pre;color:#4c70a5;font-weight:bold;letter-spacing:-.05px">Почта</div>
<svg style="position:absolute;left:75.5px;top:366px" width="5" height="9" viewBox="0 0 5 9"><path d="M.6,.8 L4.4,4.5 L.6,8.2Z" fill="#9a9a9a"/></svg>
<div style="position:absolute;left:34.5px;top:401px;font-size:12px;line-height:14px;white-space:pre;color:#4c70a5;font-weight:bold;letter-spacing:-.05px">Инструменты</div>
<svg style="position:absolute;left:121.5px;top:403px" width="5" height="9" viewBox="0 0 5 9"><path d="M.6,.8 L4.4,4.5 L.6,8.2Z" fill="#9a9a9a"/></svg>
<div style="position:absolute;left:34.5px;top:438px;font-size:12px;line-height:14px;white-space:pre;color:#4c70a5;font-weight:bold;letter-spacing:-.05px">Статистика</div>
<svg style="position:absolute;left:108px;top:440px" width="5" height="9" viewBox="0 0 5 9"><path d="M.6,.8 L4.4,4.5 L.6,8.2Z" fill="#9a9a9a"/></svg>
<div style="position:absolute;left:34.5px;top:475px;font-size:12px;line-height:14px;white-space:pre;color:#4c70a5;font-weight:bold;letter-spacing:-.05px">Настройки</div>
<svg style="position:absolute;left:103px;top:477px" width="5" height="9" viewBox="0 0 5 9"><path d="M.6,.8 L4.4,4.5 L.6,8.2Z" fill="#9a9a9a"/></svg>
<div style="position:absolute;left:34px;top:718px;font-size:11px;line-height:12px;white-space:pre;color:#4a628a">ISPsystem © 1997-2016</div>
<div style="position:absolute;left:225.5px;top:113px;font-size:11px;line-height:12px;white-space:pre;color:#5a7397;letter-spacing:-.2px">Главная</div>
<div style="position:absolute;left:308px;top:113px;font-size:11px;line-height:12px;white-space:pre;color:#5a7397;letter-spacing:-.2px">Менеджер ф...</div>
<div style="position:absolute;left:425.3px;top:113px;font-size:11px;line-height:12px;white-space:pre;color:#525866;font-weight:bold">Редактировать файл - bbco...</div>
<div style="position:absolute;left:1288.3px;top:70px;font-size:11px;line-height:12px;white-space:pre;color:#000;letter-spacing:-.15px">parti116</div>
<div style="position:absolute;left:288.5px;top:160px;font-size:17px;line-height:19px;white-space:pre;color:#4b5462;font-weight:bold;letter-spacing:-.3px">Редактировать файл - bbcode.php</div>
<div style="position:absolute;left:227.5px;top:213px;font-size:11px;line-height:12px;white-space:pre;color:#000;letter-spacing:-.1px">Имя файла</div>
<div style="position:absolute;left:227.5px;top:243px;font-size:11px;line-height:12px;white-space:pre;color:#000;letter-spacing:-.1px;letter-spacing:-.25px">Кодировка</div>
<div style="position:absolute;left:479.2px;top:212px;font-size:11px;line-height:12px;white-space:pre;color:#555;width:206px;overflow:hidden">~/www/waplex.ru/incfiles/classes/bbcode.p</div>
<div style="position:absolute;left:479.4px;top:242px;font-size:11px;line-height:12px;white-space:pre;color:#000;letter-spacing:-.1px">UTF-8</div>
<div style="position:absolute;left:229.5px;top:274px;font-size:11px;line-height:12px;white-space:pre;color:#000;letter-spacing:-.1px">Шрифт</div>
<div style="position:absolute;left:276.3px;top:274px;font-size:11px;line-height:12px;white-space:pre;color:#000;letter-spacing:-.1px">11px</div>
<div style="position:absolute;left:340.5px;top:274px;font-size:11px;line-height:12px;white-space:pre;color:#000;letter-spacing:-.1px;letter-spacing:-.4px">Режим</div>
<div style="position:absolute;left:384.3px;top:274px;font-size:11px;line-height:12px;white-space:pre;color:#000;letter-spacing:-.1px">PHP</div>
<div style="position:absolute;left:481.3px;top:274px;font-size:11px;line-height:12px;white-space:pre;color:#000;letter-spacing:-.1px">Тема</div>
<div style="position:absolute;left:519.3px;top:274px;font-size:11px;line-height:12px;white-space:pre;color:#000;letter-spacing:-.1px">Eclipse</div>
<div style="position:absolute;left:645.2px;top:274px;font-size:11px;line-height:12px;white-space:pre;color:#000;letter-spacing:-.1px;letter-spacing:-.2px">Клавиатура</div>
<div style="position:absolute;left:714.2px;top:274px;font-size:11px;line-height:12px;white-space:pre;color:#000;letter-spacing:-.1px">Ace</div>
<div style="position:absolute;left:778.5px;top:274px;font-size:11px;line-height:12px;white-space:pre;color:#000;letter-spacing:-.1px;letter-spacing:0">Скрытые символы</div>
<div style="position:absolute;left:907px;top:274px;font-size:11px;line-height:12px;white-space:pre;color:#000;letter-spacing:-.1px;letter-spacing:0">Нумерация</div>
<div style="position:absolute;left:999.4px;top:274px;font-size:11px;line-height:12px;white-space:pre;color:#000;letter-spacing:-.1px;letter-spacing:-.2px">Перенос</div>
<div style="position:absolute;left:1054.3px;top:274px;font-size:11px;line-height:12px;white-space:pre;color:#000;letter-spacing:-.1px">Off</div>
<div style="position:absolute;left:1136.2px;top:275px;font-size:10px;line-height:11px;white-space:pre;color:#000">На весь экран</div>
<div style="position:absolute;left:244.3px;top:602px;font-size:13px;line-height:15px;white-space:pre;color:#000;letter-spacing:-.1px">Сохранить</div>
<div style="position:absolute;left:361px;top:602px;font-size:13px;line-height:15px;white-space:pre;color:#000">Ok</div>
<div style="position:absolute;left:439px;top:602px;font-size:13px;line-height:15px;white-space:pre;color:#000;letter-spacing:-.1px">Отмена</div>
<div id="ed">
<div id="gut"></div>
<div class="abs" style="left:541px;top:0;width:1px;height:250px;background:#e4e4e4"></div>
<div class="abs" style="left:0;top:41px;width:52px;height:13px;background:#dadada"></div>
<div class="abs" style="left:53px;top:41px;width:975px;height:13px;background:#e8f2fe"></div>
<div class="abs" style="left:80px;top:29px;height:221px;border-left:1px dotted #c8c8c8"></div>
<div class="abs" style="left:104.5px;top:107px;height:143px;border-left:1px dotted #c8c8c8"></div>
<div class="ln" style="top:3px">195</div>
<div class="cl" style="top:3px">    <span class="k">static</span> <span class="k">function</span> notags(<span class="k">$var</span> <span class="k">=</span> <span class="s">''</span>)</div>
<div class="ln" style="top:16px">196</div>
<div class="cl" style="top:16px">    {</div>
<div class="ln" style="top:29px">197</div>
<div class="cl" style="top:29px">        <span class="k">$var</span> <span class="k">=</span> <span class="f">preg_replace</span>(<span class="s">'#\[youtube=[^]]+]#i'</span>, <span class="s">''</span>, <span class="k">$var</span>);</div>
<div class="ln" style="top:42px">198</div>
<div class="cl" style="top:42px">        <span class="k">$var</span> <span class="k">=</span> <span class="f">preg_replace</span>(<span class="s">'#\[img=[\d]+_[\d]{3})]#i'</span>, <span class="s">''</span>, <span class="k">$var</span>);</div>
<div class="ln" style="top:55px">199</div>
<div class="cl" style="top:55px">        <span class="k">$var</span> <span class="k">=</span> <span class="f">preg_replace</span>(<span class="s">'#\[color=(.+?)\](.+?)\[/color]#si'</span>, <span class="s">'$2'</span>, <span class="k">$var</span>);</div>
<div class="ln" style="top:68px">200</div>
<div class="cl" style="top:68px">        <span class="k">$var</span> <span class="k">=</span> <span class="f">preg_replace</span>(<span class="s">'!\[bg=(#[0-9a-f]{3}|#[0-9a-f]{6}|[a-z\-]+)](.+?)\[/bg]!is'</span>, <span class="s">'$2'</span>, <span class="k">$var</span>);</div>
<div class="ln" style="top:81px">201</div>
<div class="cl" style="top:81px">        <span class="k">$var</span> <span class="k">=</span> <span class="f">preg_replace</span>(<span class="s">'#\[spoiler=(.+?)\]#si'</span>, <span class="s">'$2'</span>, <span class="k">$var</span>);</div>
<div class="ln" style="top:94px">202</div>
<div class="cl" style="top:94px">        <span class="k">$replace</span> <span class="k">=</span> <span class="k">array</span>(</div>
<div class="ln" style="top:107px">203</div>
<div class="cl" style="top:107px">            <span class="s">'[small]'</span> <span class="k">=&gt;</span> <span class="s">''</span>,</div>
<div class="ln" style="top:120px">204</div>
<div class="cl" style="top:120px">            <span class="s">'[/small]'</span> <span class="k">=&gt;</span> <span class="s">''</span>,</div>
<div class="ln" style="top:133px">205</div>
<div class="cl" style="top:133px">            <span class="s">'[big]'</span> <span class="k">=&gt;</span> <span class="s">''</span>,</div>
<div class="ln" style="top:146px">206</div>
<div class="cl" style="top:146px">            <span class="s">'[/big]'</span> <span class="k">=&gt;</span> <span class="s">''</span>,</div>
<div class="ln" style="top:159px">207</div>
<div class="cl" style="top:159px">            <span class="s">'[green]'</span> <span class="k">=&gt;</span> <span class="s">''</span>,</div>
<div class="ln" style="top:172px">208</div>
<div class="cl" style="top:172px">            <span class="s">'[/green]'</span> <span class="k">=&gt;</span> <span class="s">''</span>,</div>
<div class="ln" style="top:185px">209</div>
<div class="cl" style="top:185px">            <span class="s">'[red]'</span> <span class="k">=&gt;</span> <span class="s">''</span>,</div>
<div class="ln" style="top:198px">210</div>
<div class="cl" style="top:198px">            <span class="s">'[/red]'</span> <span class="k">=&gt;</span> <span class="s">''</span>,</div>
<div class="ln" style="top:211px">211</div>
<div class="cl" style="top:211px">            <span class="s">'[blue]'</span> <span class="k">=&gt;</span> <span class="s">''</span>,</div>
<div class="ln" style="top:224px">212</div>
<div class="cl" style="top:224px">            <span class="s">'[/blue]'</span> <span class="k">=&gt;</span> <span class="s">''</span>,</div>
<div class="ln" style="top:237px">213</div>
<div class="cl" style="top:237px">            <span class="s">'[b]'</span> <span class="k">=&gt;</span> <span class="s">''</span>,</div>
<div class="ln" style="top:250px">214</div>
<svg class="abs" style="left:43px;top:19px" width="6" height="5" viewBox="0 0 6 5"><path d="M.2,.6 H5.4 L2.8,4Z" fill="#555"/></svg>
<div class="abs" style="left:456px;top:41px;width:2px;height:13px;background:#000"></div>
<div class="abs" style="left:1027px;top:0;width:17px;height:250px;background:#f1f1f1"></div>
<div class="abs" style="left:1029px;top:116px;width:13px;height:17px;background:#c1c1c1"></div>
<svg class="abs" style="left:1027px;top:0" width="17" height="250" viewBox="0 0 17 250"><path d="M5,10.6 L8.6,6.4 L12.2,10.6Z" fill="#505050"/><path d="M5,238.4 L8.6,242.6 L12.2,238.4Z" fill="#505050"/></svg>
<div class="abs" style="left:54px;top:250px;width:974px;height:17px;background:#f1f1f1"></div>
<div class="abs" style="left:70px;top:252px;width:417px;height:13px;background:#c1c1c1"></div>
<svg class="abs" style="left:54px;top:250px" width="974" height="17" viewBox="0 0 974 17"><path d="M10.6,4.8 L6.4,8.4 L10.6,12Z" fill="#a3a3a3"/><path d="M963,4.8 L967.4000000000001,8.4 L963,12Z" fill="#505050"/></svg>
</div>
<div class="abs" style="left:238px;top:570px;width:1052px;height:4.5px;background:#e1e7f0"></div>
<!-- ===== taskbar ===== -->
<div id="task">
<div class="abs" style="left:-40px;top:0;width:312px;height:30px;transform:skewX(-27deg);transform-origin:100% 100%;background:linear-gradient(90deg,#557581 0,#557581 40px,#5d7d89 130px,#5b7b87 250px,#587883 300px,#4d6b76 312px)"></div>
<div class="abs" style="left:1055px;top:0;width:400px;height:30px;transform:skewX(-45deg);transform-origin:0 100%;background:linear-gradient(90deg,#5f7c86 0,#5c7983 40px,#4d6b76 85px,#4a6873 180px,#456470 300px)"></div>
<div class="abs" style="left:0;top:0;width:1366px;height:30px;background:linear-gradient(180deg,rgba(0,0,0,.12),rgba(0,0,0,0) 30%,rgba(255,255,255,.03))"></div>
<div class="abs" style="left:363.5px;top:1px;width:43px;height:29px;background:rgba(255,255,255,.4);border:1.5px solid rgba(255,255,255,.92)"></div>
<div class="abs" style="left:410px;top:1px;width:42px;height:28.5px;background:rgba(255,255,255,.2);border:1px solid rgba(255,255,255,.45)"></div>
<div class="abs" style="left:456px;top:1px;width:42px;height:28.5px;background:rgba(255,255,255,.2);border:1px solid rgba(255,255,255,.45)"></div>
<svg class="abs" style="left:0;top:0" width="520" height="30" viewBox="0 738 520 30">
<!-- windows -->
<path d="M12.4,747.2 L18.4,746.3 V751.6 H12.4Z M19.4,746.2 L26.6,745.2 V751.6 H19.4Z M12.4,752.6 H18.4 V757.9 L12.4,757Z M19.4,752.6 H26.6 V759 L19.4,758Z" fill="#fff"/>
<!-- explorer -->
<path d="M55.6,748.4 Q55.6,747 57,747 H61.4 L62.8,748.6 H69.6 Q71,748.6 71,750 V759.6 H55.6Z" fill="#f3cf62"/><path d="M55.6,750.4 H71 V759.6 H55.6Z" fill="#f9e08a"/><rect x="56.6" y="747.4" width="3" height="1" fill="#5ab82a"/><path d="M57.8,760.8 V755.2 Q57.8,753.6 59.4,753.6 H67.2 Q68.8,753.6 68.8,755.2 V760.8 H66.2 V756.6 H60.4 V760.8Z" fill="#3b9be8"/><rect x="60.4" y="758.4" width="5.8" height="2.4" fill="#8cc9f6"/>
<!-- aimp -->
<circle cx="109" cy="753" r="6.9" fill="#f7a21b" stroke="#1a1a1a" stroke-width="1.6"/><path d="M109,748.6 L113.2,756.2 H104.8Z" fill="#1a1a1a"/><path d="M109,752 L110.6,755 H107.4Z" fill="#f7a21b"/>
<!-- wot -->
<path d="M149,748.4 L151.6,745.8 H157.8 L160.4,748.4 V755.4 L154.7,761 L149,755.4Z" fill="#1e1e1e" stroke="#b8b0a0" stroke-width="1.1"/><path d="M150.8,749 H158.6 V750.6 H150.8Z M151.4,750.6 H152.8 V755.6 H151.4Z M154,750.6 H155.4 V758.4 H154Z M156.6,750.6 H158 V755.6 H156.6Z" fill="#d8d4c8"/>
<!-- opera -->
<path fill-rule="evenodd" d="M200.8,744.8 A8,8.2 0 1 0 200.8,761.2 A8,8.2 0 1 0 200.8,744.8Z M201,747 A3.6,6 0 1 1 201,759 A3.6,6 0 1 1 201,747Z" fill="#e8222a"/><path d="M203.4,746.2 Q208.4,748.4 208.4,753 Q208.4,757.6 203.4,759.8 Q205.4,757.4 205.4,753 Q205.4,748.6 203.4,746.2Z" fill="#f25058"/>
<!-- filezilla -->
<rect x="239.2" y="745" width="15.8" height="16" fill="#b2000a"/><rect x="239.2" y="745" width="15.8" height="8" fill="#c8141e" opacity=".6"/><text x="240.6" y="758.4" font-family="Liberation Sans,sans-serif" font-weight="bold" font-style="italic" font-size="12.5" fill="#fff" letter-spacing="-.8">Fz</text>
<!-- photoshop -->
<rect x="285.6" y="745.5" width="15" height="14.6" fill="#191d5c" stroke="#8fb8f2" stroke-width="1"/><text x="287.4" y="756.8" font-family="Liberation Sans,sans-serif" font-size="10" fill="#9cc4f8" letter-spacing="-.3">Ps</text>
<!-- icq -->
<g transform="translate(339,753)"><g fill="#33b648"><ellipse cx="0" cy="-4.5" rx="1.9" ry="2.9" transform="rotate(22.5)"/><ellipse cx="0" cy="-4.5" rx="1.9" ry="2.9" transform="rotate(67.5)"/><ellipse cx="0" cy="-4.5" rx="1.9" ry="2.9" transform="rotate(112.5)"/><ellipse cx="0" cy="-4.5" rx="1.9" ry="2.9" transform="rotate(157.5)"/><ellipse cx="0" cy="-4.5" rx="1.9" ry="2.9" transform="rotate(202.5)"/><ellipse cx="0" cy="-4.5" rx="1.9" ry="2.9" transform="rotate(292.5)"/><ellipse cx="0" cy="-4.5" rx="1.9" ry="2.9" transform="rotate(337.5)"/></g><ellipse cx="0" cy="-4.5" rx="1.9" ry="2.9" transform="rotate(247.5)" fill="#e8282a"/><circle r="2" fill="#ffe11a"/></g>
<!-- chrome -->
<path d="M385.2,753.1 L379.05,749.55 A7.1,7.1 0 0 1 391.35,749.55Z" fill="#de4a3c"/><path d="M385.2,753.1 L391.35,749.55 A7.1,7.1 0 0 1 385.20,760.20Z" fill="#ffcd40"/><path d="M385.2,753.1 L385.20,760.20 A7.1,7.1 0 0 1 379.05,749.55Z" fill="#1da462"/><path d="M385.2,749.8000000000001 H391.8 A7.1,7.1 0 0 0 379.05,749.55 L382.30,754.70Z" fill="#de4a3c"/><path d="M388.10,754.70 L384.80,760.20 A7.1,7.1 0 0 0 391.80,749.80 H385.2Z" fill="#ffcd40"/><path d="M382.30,754.70 L379.05,749.55 A7.1,7.1 0 0 0 384.80,760.20 L388.10,754.70Z" fill="#1da462"/><circle cx="385.2" cy="753.1" r="3.3" fill="#f1f1f1"/><circle cx="385.2" cy="753.1" r="2.6" fill="#4a8af4"/>
<!-- skype -->
<circle cx="427.4" cy="749.6" r="4.6" fill="#12a5f4"/><circle cx="434.8" cy="756.6" r="4.6" fill="#12a5f4"/><circle cx="431" cy="753" r="6.6" fill="#12a5f4"/><text x="427.2" y="757.6" font-family="Liberation Sans,sans-serif" font-weight="bold" font-size="12.5" fill="#fff">S</text>
<!-- 7dtd -->
<rect x="469" y="745.3" width="15.6" height="15.2" rx="1" fill="#120c0a"/><rect x="472" y="748" width="9.6" height="10" fill="#6a5a4a"/><path d="M473.4,746.4 H482.8 L478.4,758.6 H475.6 L479.4,749.2 H473.4Z" fill="#b8221c"/><rect x="474" y="751.6" width="5.6" height="4.4" fill="#a8957a" opacity=".8"/>
</svg>
<svg class="abs" style="left:1100px;top:0" width="150" height="30" viewBox="1100 738 150 30">
<path d="M1106.6,756 L1110.5,752.2 L1114.4,756Z" fill="#fff"/>
<rect x="1127.4" y="746.5" width="15.2" height="14.8" rx="1" fill="#c8141c"/><rect x="1127.4" y="746.5" width="15.2" height="7" fill="#e04048" opacity=".45"/><ellipse cx="1135" cy="754" rx="4.6" ry="6.2" fill="none" stroke="#fff" stroke-width="1.1" transform="rotate(8 1135 754)"/>
<path d="M1153.4,746.6 V749.4 M1156.6,746.6 V749.4" stroke="#fff" stroke-width="1.2"/><path d="M1151.8,749.4 H1158.2 V752.6 Q1158.2,754 1156.4,754.2 V761 H1153.6 V754.2 Q1151.8,754 1151.8,752.6Z" fill="#fff"/><rect x="1160" y="748.4" width="5.8" height="12" fill="none" stroke="#fff" stroke-width="1.3"/><rect x="1161.6" y="746.8" width="2.6" height="1.4" fill="#fff"/><rect x="1161.4" y="750" width="3" height="9" fill="#fff" opacity=".85"/>
<path d="M1175.4,751.6 H1178 L1181.6,748 V760 L1178,756.4 H1175.4Z" fill="#fff"/><path d="M1183.6,751.4 Q1185.2,754 1183.6,756.6 M1185.8,749.6 Q1188.4,754 1185.8,758.4 M1188,748 Q1191.4,754 1188,760" fill="none" stroke="#fff" stroke-width="1"/>
<path d="M1199,755.2 L1206,750 L1215.4,754.6 L1208.2,760 Z" fill="#18c81e" stroke="#0a2a0a" stroke-width="1.2"/><path d="M1199,755.2 V757 L1208.2,761.8 L1215.4,756.4 V754.6 L1208.2,760Z" fill="#0a2a0a"/><path d="M1203.6,754.8 L1206.4,752.8 L1211,755 L1208,757.2Z" fill="#0a3a0a"/>
<path d="M1223.4,748 H1231 L1227.8,751.8 V760.6 H1226.6 V751.8Z" fill="none" stroke="#fff" stroke-width="1"/><path d="M1224,760.6 H1226 V758.6 H1224Z M1229.4,760.6 V756 H1231.6 V760.6Z M1232.8,760.6 V752.6 H1235 V760.6Z M1236.2,760.6 V748.4 H1238.4 V760.6Z" fill="#fff"/>
</svg>
<div class="abs" style="left:1254.5px;top:9px;font-size:12px;line-height:14px;color:#fff;letter-spacing:-1.1px">РУС</div>
<div class="abs" style="left:1307.8px;top:9px;font-size:12px;line-height:14px;color:#fff;letter-spacing:-.8px">18:54</div>
</div>

</body>
</html>
